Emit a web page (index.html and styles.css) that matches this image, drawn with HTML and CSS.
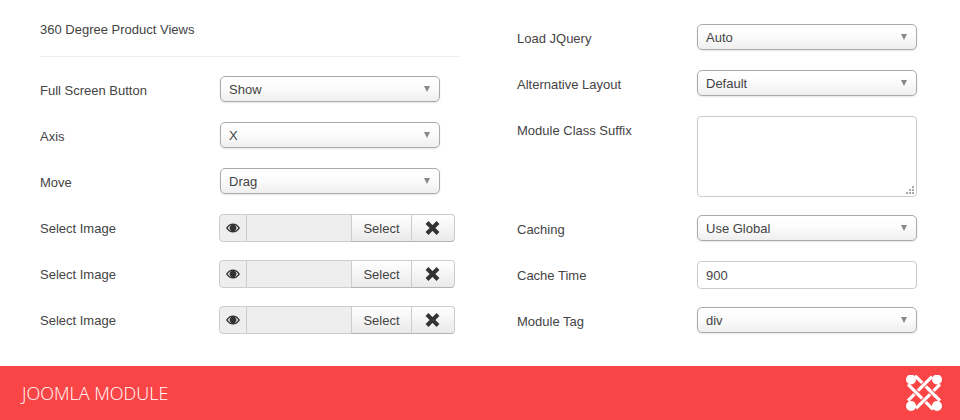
FILE: index.html
```html
<!DOCTYPE html>
<html lang="en">
<head>
  <meta charset="UTF-8">
  <title>Joomla Module</title>
  <link rel="stylesheet" href="styles.css">
</head>
<body>
  <div class="panel">
    <div class="col col-left">
      <div class="heading">360 Degree Product Views</div>
      <div class="row"><label>Full Screen Button</label><div class="select">Show</div></div>
      <div class="row"><label>Axis</label><div class="select">X</div></div>
      <div class="row"><label>Move</label><div class="select">Drag</div></div>
      <div class="row row-media"><label>Select Image</label>
        <div class="media">
          <span class="eye"><svg width="14" height="10" viewBox="0 0 14 10"><path d="M0 5C2 1.800 4.300 .5 7 .5S12 1.800 14 5C12 8.200 9.700 9.500 7 9.500S2 8.200 0 5Z" fill="#333"/><path d="M1.700 5C3 3.100 4.300 2.200 5.400 1.900A3.400 3.400 0 1 0 8.600 1.900C9.700 2.200 11 3.100 12.300 5C11 7 9 8.300 7 8.300S3 7 1.700 5Z" fill="#eee"/><circle cx="7" cy="4.700" r="2.500" fill="#333"/></svg></span>
          <span class="path"></span>
          <span class="btn btn-select">Select</span>
          <span class="btn btn-clear"><svg width="15" height="14" viewBox="0 0 15 14"><path d="M2 1.500L13 12.500M13 1.500L2 12.500" stroke="#333" stroke-width="4"/></svg></span>
        </div>
      </div>
      <div class="row row-media"><label>Select Image</label>
        <div class="media">
          <span class="eye"><svg width="14" height="10" viewBox="0 0 14 10"><path d="M0 5C2 1.800 4.300 .5 7 .5S12 1.800 14 5C12 8.200 9.700 9.500 7 9.500S2 8.200 0 5Z" fill="#333"/><path d="M1.700 5C3 3.100 4.300 2.200 5.400 1.900A3.400 3.400 0 1 0 8.600 1.900C9.700 2.200 11 3.100 12.300 5C11 7 9 8.300 7 8.300S3 7 1.700 5Z" fill="#eee"/><circle cx="7" cy="4.700" r="2.500" fill="#333"/></svg></span>
          <span class="path"></span>
          <span class="btn btn-select">Select</span>
          <span class="btn btn-clear"><svg width="15" height="14" viewBox="0 0 15 14"><path d="M2 1.500L13 12.500M13 1.500L2 12.500" stroke="#333" stroke-width="4"/></svg></span>
        </div>
      </div>
      <div class="row row-media"><label>Select Image</label>
        <div class="media">
          <span class="eye"><svg width="14" height="10" viewBox="0 0 14 10"><path d="M0 5C2 1.800 4.300 .5 7 .5S12 1.800 14 5C12 8.200 9.700 9.500 7 9.500S2 8.200 0 5Z" fill="#333"/><path d="M1.700 5C3 3.100 4.300 2.200 5.400 1.900A3.400 3.400 0 1 0 8.600 1.900C9.700 2.200 11 3.100 12.300 5C11 7 9 8.300 7 8.300S3 7 1.700 5Z" fill="#eee"/><circle cx="7" cy="4.700" r="2.500" fill="#333"/></svg></span>
          <span class="path"></span>
          <span class="btn btn-select">Select</span>
          <span class="btn btn-clear"><svg width="15" height="14" viewBox="0 0 15 14"><path d="M2 1.500L13 12.500M13 1.500L2 12.500" stroke="#333" stroke-width="4"/></svg></span>
        </div>
      </div>
    </div>

    <div class="col col-right">
      <div class="row"><label>Load JQuery</label><div class="select">Auto</div></div>
      <div class="row"><label>Alternative Layout</label><div class="select">Default</div></div>
      <div class="row row-tall"><label>Module Class Suffix</label>
        <div class="textarea"><svg class="grip" width="9" height="9" viewBox="0 0 9 9" fill="#aaa"><rect x="6" y="0" width="2" height="2"/><rect x="3" y="3" width="2" height="2"/><rect x="6" y="3" width="2" height="2"/><rect x="0" y="6" width="2" height="2"/><rect x="3" y="6" width="2" height="2"/><rect x="6" y="6" width="2" height="2"/></svg></div>
      </div>
      <div class="row"><label>Caching</label><div class="select">Use Global</div></div>
      <div class="row row-input"><label>Cache Time</label><div class="input">900</div></div>
      <div class="row"><label>Module Tag</label><div class="select">div</div></div>
    </div>
  </div>

  <div class="footer">
    <span class="footer-title">JOOMLA MODULE</span>
    <svg class="logo" width="36" height="36" viewBox="0 0 36 36" fill="none" stroke-width="3.200">
      <path d="M9 .7L34 25.700" stroke="#fff"/>
      <path d="M26 1.700L2 25.700" stroke="#f94546" stroke-width="5"/>
      <path d="M26 1.700L2 25.700" stroke="#fff"/>
      <path d="M2 9.300L27 34.300" stroke="#f94546" stroke-width="5"/>
      <path d="M2 9.300L27 34.300" stroke="#fff"/>
      <path d="M34 9.300L10 33.300" stroke="#f94546" stroke-width="5"/>
      <path d="M34 9.300L10 33.300" stroke="#fff"/>
      <path d="M23 14.700L28.600 20.300" stroke="#f94546" stroke-width="5"/>
      <path d="M22 13.700L29.600 21.300" stroke="#fff"/>
      <g fill="#fff">
        <circle cx="5" cy="4.500" r="5"/>
        <circle cx="31" cy="4.500" r="5"/>
        <circle cx="5" cy="31" r="5"/>
        <circle cx="31" cy="31" r="5"/>
      </g>
    </svg>
  </div>
</body>
</html>
```

FILE: styles.css
```css
html, body {
  margin: 0;
  height: 420px;
  overflow: hidden;
}

body {
  font-family: "Liberation Sans", Arial, sans-serif;
  font-size: 13px;
  color: #444444;
  background-color: #fff;
  display: flex;
  flex-direction: column;
}

.panel {
  flex: 1;
  display: flex;
  padding: 0 43px 0 40px;
}

.col-left {
  width: 420px;
}

.col-right {
  width: 400px;
  margin-left: 57px;
  padding-top: 24px;
}

.heading {
  height: 56px;
  line-height: 59px;
  border-bottom: 1px solid #eeeeee;
  margin-bottom: 19px;
}

.row {
  display: flex;
  margin-bottom: 20px;
}

.row label {
  width: 180px;
  flex-shrink: 0;
  padding-top: 8px;
  line-height: 14px;
}

.select {
  width: 220px;
  height: 26px;
  box-sizing: border-box;
  line-height: 25px;
  padding-left: 8px;
  border: 1px solid #aaaaaa;
  border-radius: 5px;
  background: linear-gradient(#ffffff 0%, #fcfcfc 45%, #efefef 100%);
  box-shadow: 0 1px 2px rgba(0, 0, 0, 0.1);
  position: relative;
}

.select::after {
  content: "";
  position: absolute;
  right: 9px;
  top: 9px;
  border-left: 3.500px solid transparent;
  border-right: 3.500px solid transparent;
  border-top: 6px solid #888888;
}

.row-media {
  margin-bottom: 18px;
}

.media {
  display: flex;
  height: 28px;
  width: 236px;
  margin-left: -1px;
  box-sizing: border-box;
}

.eye {
  width: 28px;
  box-sizing: border-box;
  display: flex;
  align-items: center;
  justify-content: center;
  background-color: #eeeeee;
  border: 1px solid #cccccc;
  border-radius: 4px 0 0 4px;
}

.path {
  width: 104px;
  background-color: #eeeeee;
  border-top: 1px solid #cccccc;
  border-bottom: 1px solid #cccccc;
}

.btn {
  box-sizing: border-box;
  display: flex;
  align-items: center;
  justify-content: center;
  border: 1px solid #cccccc;
  border-bottom-color: #b3b3b3;
  background: linear-gradient(#ffffff, #eaeaea);
}

.btn-select {
  width: 61px;
  padding-top: 1px;
}

.btn-clear {
  width: 43px;
  padding-right: 2px;
  border-left: 0;
  border-radius: 0 4px 4px 0;
}

.textarea {
  width: 220px;
  height: 81px;
  box-sizing: border-box;
  border: 1px solid #cccccc;
  border-radius: 4px;
  position: relative;
}

.grip {
  position: absolute;
  right: 1px;
  bottom: 1px;
}

.row-tall {
  margin-bottom: 18px;
}

.row-input {
  margin-bottom: 18px;
}

.input {
  width: 220px;
  height: 28px;
  box-sizing: border-box;
  border: 1px solid #cccccc;
  border-radius: 4px;
  line-height: 27px;
  padding-left: 8px;
}

.footer {
  height: 54px;
  flex-shrink: 0;
  background-color: #f94546;
  display: flex;
  align-items: center;
  justify-content: space-between;
  padding: 0 18px 0 22px;
}

.footer-title {
  font-family: "Open Sans", sans-serif;
  font-weight: 300;
  font-size: 18px;
  color: #fff;
}
```
